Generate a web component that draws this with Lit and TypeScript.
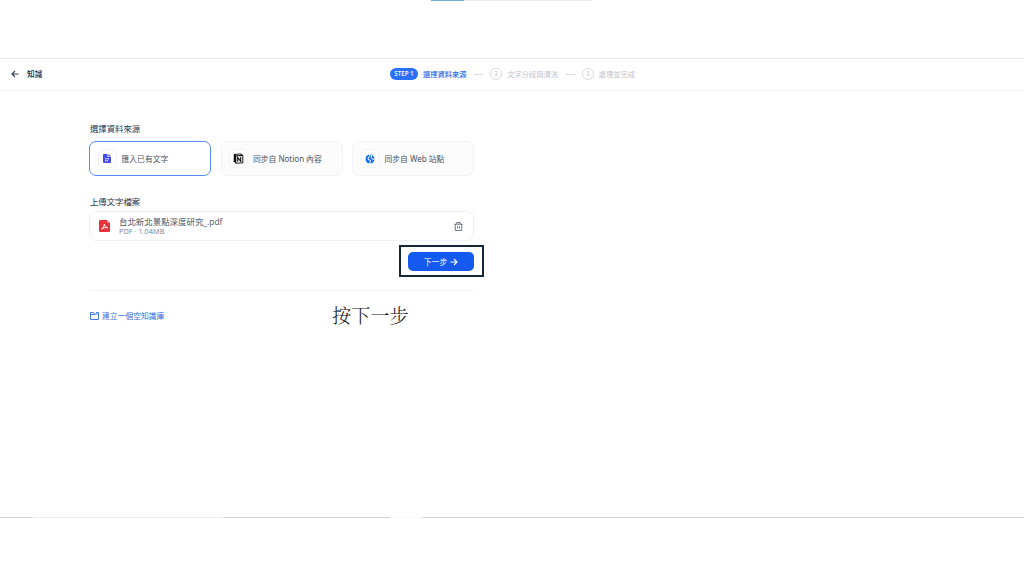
import { LitElement, html, css, svg } from "lit";
import { customElement } from "lit/decorators.js";

const notionIcon = svg`<svg width="11" height="11" viewBox="0 0 20 20"><path d="M1.500 1.600 14 .7l4.800 3.400v14.400L5 19.400 1.200 15z" fill="#111"/><path d="M6 6 17 5.400v11.800l-11 .7z" fill="#fff"/><path d="M8.500 16V8l5.600 7.200V7" fill="none" stroke="#111" stroke-width="2"/><path d="M4 3.200 13 2.500l1.800 1.100L5.500 4.300z" fill="#fff"/></svg>`;
const docIcon = svg`<svg width="8" height="9" viewBox="0 0 16 18"><path d="M2 0h7v5.500h7V16a2 2 0 0 1-2 2H2a2 2 0 0 1-2-2V2a2 2 0 0 1 2-2z" fill="#444ce7"/><path d="M11 0l5 4.500h-5z" fill="#444ce7"/><path d="M4 9.500h8M4 13.500h6" stroke="#fff" stroke-width="1.600"/></svg>`;
const webIcon = svg`<svg width="10" height="10" viewBox="0 0 20 20"><circle cx="10" cy="10" r="9" fill="#1570ef"/><path d="M9.500 0v4.500L6 8l1 3.500 4 1V15l-2.500 5M13.500 1.500 12.500 7l2.500 3.500 5-.5" fill="none" stroke="#fff" stroke-width="2"/></svg>`;
const pdfIcon = svg`<svg width="11" height="12" viewBox="0 0 22 24"><path d="M2 0h14l6 6v16a2 2 0 0 1-2 2H2a2 2 0 0 1-2-2V2a2 2 0 0 1 2-2z" fill="#e8333a"/><path d="M16 0v6h6z" fill="#f28a8d"/><path d="M5 18c3-1.500 6-5 5.500-10C12 12 14 15 18 15.500 13 14.500 9 15.500 5 18z" fill="none" stroke="#fff" stroke-width="2" stroke-linejoin="round"/></svg>`;

@customElement("app-root")
export class AppRoot extends LitElement {
  static styles = css`
    :host {
      display: flex;
      flex-direction: column;
      position: relative;
      box-sizing: border-box;
      width: 1024px;
      height: 576px;
      overflow: hidden;
      background: #fff;
      color: #354052;
      font: 8px/12px "Open Sans", "Noto Sans CJK TC", sans-serif;
      white-space: nowrap;
    }
    svg { display: block; flex: none; }
    .top { height: 58px; flex: none; padding-left: 431px; display: flex; }
    .top i { height: 1px; width: 33px; background: #72aed2; }
    .top i + i { width: 128px; background: #efefef; }
    header {
      flex: none;
      box-sizing: border-box;
      height: 33px;
      border-top: 1px solid #e6e7e9;
      border-bottom: 1px solid #f5f5f7;
      display: grid;
      grid-template-columns: 390px auto;
      align-items: center;
      padding-bottom: 1px;
    }
    .back { display: flex; align-items: center; gap: 8px; padding-left: 11px; font-size: 7.700px; font-weight: 500; color: #1d2939; }
    .steps { display: flex; align-items: center; font-size: 7.250px; color: #bfc3ca; }
    .pill { width: 28px; height: 12px; border-radius: 6px; background: #2970ff; color: #fff; font-size: 6.200px; font-weight: 600; text-align: center; margin-right: 5px; }
    .current { color: #2f6be8; font-weight: 500; }
    .dash { width: 9px; height: 1px; background: #d8dbe0; margin: 0 7px 0 7.700px; }
    .num { box-sizing: border-box; width: 12px; height: 12px; border: 1px solid #d9dce1; border-radius: 50%; font-size: 6.200px; line-height: 10px; text-align: center; margin-right: 5px; }
    main { box-sizing: border-box; width: 474px; height: 426px; flex: none; padding: 31px 0 0 90px; }
    h2 { margin: 0; font-size: 8.400px; line-height: 13px; font-weight: 400; color: #2a3547; }
    .cards { display: grid; grid-template-columns: repeat(3, 122px); gap: 9.500px; margin: 6px 0 0 -1px; }
    .card { box-sizing: border-box; height: 35px; border: 1px solid #f2f3f6; border-radius: 7px; background: #fcfcfd; display: flex; align-items: center; gap: 5px; padding-left: 7.500px; font-size: 7.800px; color: #495464; }
    .latin { font-family: "Noto Sans", "Open Sans", sans-serif; font-size: 8px; }
    .card.on { border-color: #528bff; background: #fff; }
    .tile { box-sizing: border-box; width: 19px; height: 19px; border: 1px solid #f3f3f5; border-radius: 5px; background: #fff; display: grid; place-items: center; }
    .upload { margin-top: 19px; }
    .file { box-sizing: border-box; width: 385px; height: 30px; margin: 3px 0 0 -1px; border: 1px solid #f0f1f4; border-radius: 7px; display: flex; align-items: center; padding: 0 10px 0 9px; }
    .meta { flex: 1; margin-left: 9px; }
    .name { font-size: 8.450px; line-height: 10px; color: #4b5565; }
    .sub { font-size: 7.400px; line-height: 9px; color: #7b8494; }
    .actions { display: flex; justify-content: flex-end; margin: 4px -10px 0 0; }
    .frame { box-sizing: border-box; width: 85px; height: 32px; border: 2px solid #14283a; display: grid; place-items: center; padding: 1px 1px 0 0; }
    button { box-sizing: border-box; width: 66px; height: 19px; padding: 0; border: 0; border-radius: 5px; background: #155aef; color: #fff; font: inherit; font-size: 7.800px; display: flex; align-items: center; justify-content: center; gap: 3px; }
    .rule { height: 1px; margin-top: 13px; background: #f3f4f6; }
    .bottom { display: flex; align-items: center; height: 30px; margin-top: 10px; }
    .create { display: flex; align-items: center; gap: 3px; width: 242px; font-size: 7.800px; color: #2f6fdc; }
    .note { font: 300 19.200px/30px "Noto Serif CJK TC", "Noto Sans CJK TC", serif; color: #111; margin-top: -3px; }
    .foot { flex: none; display: flex; height: 1px; background: #d2d2d2; }
    .foot i { width: 190px; margin-left: 33px; background: #ececec; }
    .foot i + i { width: 33px; margin-left: 167px; background: #f8f8f8; }
  `;

  private card(icon: unknown, label: unknown, on = false) {
    return html`<div class="card ${on ? "on" : ""}"><span class="tile">${icon}</span><span>${label}</span></div>`;
  }

  render() {
    return html`
      <div class="top"><i></i><i></i></div>
      <header>
        <div class="back">
          <svg width="8" height="8" viewBox="0 0 8 8" fill="none" stroke="#354052" stroke-width="1.100"><path d="M7.500 4H1M4 1 1 4l3 3"/></svg>
          <span>知識</span>
        </div>
        <div class="steps">
          <span class="pill">STEP 1</span><span class="current">選擇資料來源</span>
          <span class="dash"></span><span class="num">2</span><span>文字分段與清洗</span>
          <span class="dash"></span><span class="num">3</span><span>處理並完成</span>
        </div>
      </header>
      <main>
        <h2>選擇資料來源</h2>
        <div class="cards">
          ${this.card(docIcon, "匯入已有文字", true)}
          ${this.card(notionIcon, html`同步自 <span class="latin">Notion</span> 內容`)}
          ${this.card(webIcon, html`同步自 <span class="latin">Web</span> 站點`)}
        </div>
        <h2 class="upload">上傳文字檔案</h2>
        <div class="file">
          ${pdfIcon}
          <div class="meta"><div class="name">台北新北景點深度研究_.pdf</div><div class="sub">PDF · 1.04MB</div></div>
          <svg width="9" height="9" viewBox="0 0 18 18" fill="none" stroke="#596273" stroke-width="1.700"><path d="M0.500 4.500h17M5.500 4V1h7v3M2.500 4.500V17h13V4.500M7 8.500v4.500M11 8.500v4.500"/></svg>
        </div>
        <div class="actions"><div class="frame">
          <button><span>下一步</span><svg width="8" height="8" viewBox="0 0 8 8" fill="none" stroke="#fff" stroke-width="1.100"><path d="M.5 4H7M4 1l3 3-3 3"/></svg></button>
        </div></div>
        <div class="rule"></div>
        <div class="bottom">
          <div class="create">
            <svg width="9" height="8" viewBox="0 0 18 16" fill="none" stroke="#2f6fdc" stroke-width="1.800"><path d="M1 15V1h6l2.500 3H17v11zM1 5h7l2-1M12 1h5v3"/></svg>
            <span>建立一個空知識庫</span>
          </div>
          <div class="note">按下一步</div>
        </div>
      </main>
      <div class="foot"><i></i><i></i></div>
    `;
  }
}
